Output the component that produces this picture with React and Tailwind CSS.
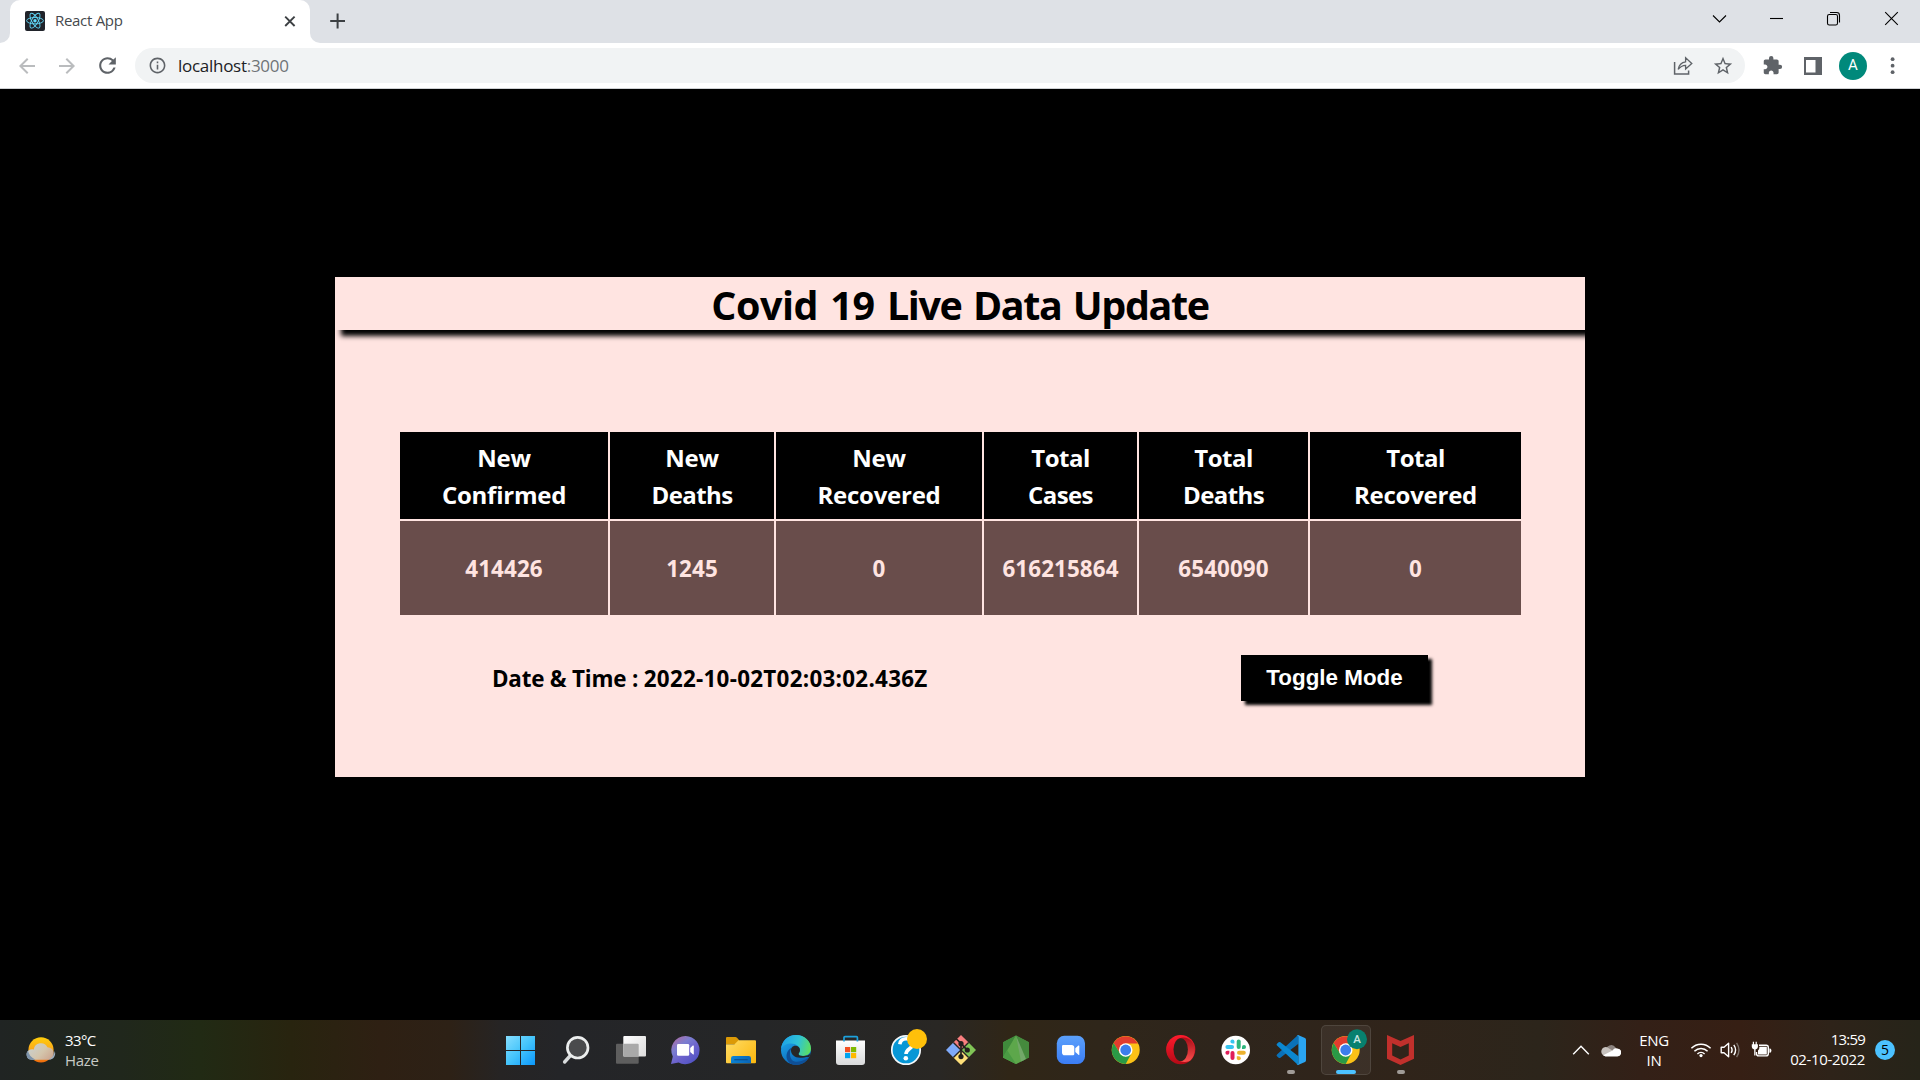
import React from "react";
import {
  MdArrowBack,
  MdArrowForward,
  MdRefresh,
  MdInfoOutline,
  MdStarBorder,
  MdExtension,
} from "react-icons/md";

/* ---------- Browser chrome ---------- */

function ReactFavicon() {
  return (
    <svg width="20" height="20" viewBox="0 0 20 20" fill="none">
      <rect width="20" height="20" rx="2" fill="#20232a" />
      <g stroke="#61dafb" strokeWidth="0.9">
        <ellipse cx="10" cy="9.7" rx="8.4" ry="3.2" />
        <ellipse cx="10" cy="9.7" rx="8.4" ry="3.2" transform="rotate(60 10 9.7)" />
        <ellipse cx="10" cy="9.7" rx="8.4" ry="3.2" transform="rotate(120 10 9.7)" />
      </g>
      <circle cx="10" cy="9.7" r="1.7" fill="#61dafb" />
    </svg>
  );
}

function WindowControl({ children }) {
  return (
    <div className="flex h-[37px] w-[57px] items-center justify-center">
      <svg width="15" height="15" viewBox="0 0 15 15" fill="none" stroke="#000" strokeWidth="1.1" className="overflow-visible">
        {children}
      </svg>
    </div>
  );
}

function TabStrip() {
  return (
    <div className="flex h-[43px] items-start bg-[#dee1e6]">
      <div className="flex h-[43px] w-[10px] flex-none bg-white">
        <div className="h-full w-full rounded-br-[10px] bg-[#dee1e6]" />
      </div>
      <div className="h-[43px] w-[300px] flex-none">
        <div className="flex h-[43px] items-start rounded-t-[10px] bg-white pl-[15px] pr-[12px] pt-[11px]">
          <ReactFavicon />
          <span className="ml-[10px] flex-1 text-[15px] leading-[19px] tracking-[-0.3px] text-[#45494d]">
            React App
          </span>
          <svg className="mt-[2px]" width="16" height="16" viewBox="0 0 16 16" stroke="#3c4043" strokeWidth="1.9">
            <path d="M3.2 3.6L12.6 13M12.6 3.6L3.2 13" />
          </svg>
        </div>
      </div>
      <div className="flex h-[43px] w-[10px] flex-none bg-white">
        <div className="h-full w-full rounded-bl-[10px] bg-[#dee1e6]" />
      </div>
      <svg className="ml-[10px] mt-[13px]" width="16" height="16" viewBox="0 0 16 16" stroke="#3c4043" strokeWidth="2">
        <path d="M7.6 0.6V15.4M0.2 8H15" />
      </svg>
      <div className="ml-auto flex pr-px">
        <WindowControl>
          <path d="M1 4.5L7.5 11L14 4.5" />
        </WindowControl>
        <WindowControl>
          <path d="M1 7.5H14" />
        </WindowControl>
        <WindowControl>
          <rect x="1.5" y="3.5" width="10" height="10.5" rx="1.8" />
          <path d="M4 1.5H10.6Q13.5 1.5 13.5 4.4V11.5" />
        </WindowControl>
        <WindowControl>
          <path d="M2.2 1.2L14.8 13.8M14.8 1.2L2.2 13.8" />
        </WindowControl>
      </div>
    </div>
  );
}

function ToolbarCell({ children }) {
  return <div className="flex h-[35px] w-[40px] flex-none items-center justify-center">{children}</div>;
}

function Toolbar() {
  return (
    <div className="flex h-[46px] items-center border-b border-[#cfd1d4] bg-white pl-[7px] pr-[7px] text-[#5f6368]">
      <ToolbarCell>
        <MdArrowBack size={24} color="#babcbe" />
      </ToolbarCell>
      <ToolbarCell>
        <MdArrowForward size={24} color="#babcbe" />
      </ToolbarCell>
      <ToolbarCell>
        <MdRefresh size={25} />
      </ToolbarCell>
      <div className="ml-[8px] flex h-[35px] w-[1610px] items-center rounded-full bg-[#f1f3f4] pl-[13px] pr-[2px]">
        <MdInfoOutline size={19} />
        <span className="ml-[11px] flex-1 text-[17px] leading-[35px] tracking-[-0.28px] text-[#202124]">
          localhost<span className="text-[#6f7377]">:3000</span>
        </span>
        <ToolbarCell>
          <svg width="20" height="20" viewBox="0 0 20 20" fill="none" stroke="#5f6368" strokeWidth="1.5">
            <path d="M1.6 6V18H15.6V14.5" />
            <path d="M5.2 13.4Q6.3 6.6 12.6 5.8V1.8L18.8 7.6L12.6 13V9.4Q8 9.6 5.2 13.4Z" strokeWidth="1.3" />
          </svg>
        </ToolbarCell>
        <ToolbarCell>
          <MdStarBorder size={22} />
        </ToolbarCell>
      </div>
      <div className="ml-[7px] flex items-center">
        <ToolbarCell>
          <MdExtension size={21} />
        </ToolbarCell>
        <div className="w-px" />
        <ToolbarCell>
          <svg width="18" height="18" viewBox="0 0 18 18">
            <path d="M0 0H18V18H0ZM2 3V15.5H11.5V3Z" fill="#5f6368" fillRule="evenodd" />
          </svg>
        </ToolbarCell>
        <ToolbarCell>
          <span className="flex h-[28px] w-[28px] items-center justify-center rounded-full bg-[#00897b] font-['Roboto'] text-[15px] leading-none text-white">
            A
          </span>
        </ToolbarCell>
        <ToolbarCell>
          <svg width="6" height="18" viewBox="0 0 6 18" fill="#5f6368">
            <circle cx="2.6" cy="2.2" r="1.9" />
            <circle cx="2.6" cy="8.7" r="1.9" />
            <circle cx="2.6" cy="15.2" r="1.9" />
          </svg>
        </ToolbarCell>
      </div>
    </div>
  );
}

/* ---------- Page content ---------- */

const COLUMNS = [
  { top: "New", bottom: "Confirmed", value: "414426" },
  { top: "New", bottom: "Deaths", value: "1245", tight: true },
  { top: "New", bottom: "Recovered", value: "0" },
  { top: "Total", bottom: "Cases", value: "616215864", tight: true },
  { top: "Total", bottom: "Deaths", value: "6540090", tight: true },
  { top: "Total", bottom: "Recovered", value: "0" },
];

function CovidCard() {
  return (
    <section className="h-[500px] w-[1250px] overflow-hidden bg-[#ffe4e1] text-black">
      <h1 className="h-[53px] pt-[3px] text-center text-[39.5px] font-bold leading-[50px] tracking-[-1.4px] shadow-[6px_6px_5px_#000] [word-spacing:2.6px]">
        <span className="tracking-[-0.5px]">Covid 19 </span>Live Data Update
      </h1>
      <div className="ml-[65px] mt-[102px] grid grid-cols-[208px_164px_206px_153px_169px_211px] grid-rows-[87px_94px] gap-[2px] text-center">
        {COLUMNS.map((c, i) => (
          <div
            key={`h${i}`}
            className="flex flex-col justify-center bg-black pt-px text-[24px] font-bold leading-[37px] tracking-[-0.25px] text-white"
          >
            <span className={c.top === "Total" ? "tracking-[-0.5px]" : ""}>{c.top}</span>
            <span className={c.tight ? "tracking-[-0.58px]" : ""}>{c.bottom}</span>
          </div>
        ))}
        {COLUMNS.map((c, i) => (
          <div
            key={`v${i}`}
            className="flex items-center justify-center bg-[#694d4b] pt-[2px] text-[22.4px] font-bold tracking-[0.1px] text-[#ffe4e1]"
          >
            {c.value}
          </div>
        ))}
      </div>
      <div className="mt-[40px] flex h-[46px] items-center justify-between pl-[157px] pr-[157px]">
        <p className="pt-[2px] text-[22.4px] font-bold tracking-[0.28px]">
          <span className="tracking-[-0.2px]">Date &amp; Time : </span>2022-10-02T02:03:02.436Z
        </p>
        <button className="h-[46px] w-[187px] bg-black pb-px font-['Liberation_Sans'] text-[22.4px] font-bold text-white shadow-[4px_4px_3px_#000]">
          Toggle Mode
        </button>
      </div>
    </section>
  );
}

/* ---------- Taskbar ---------- */

function Icon({ children }) {
  return (
    <svg width="40" height="40" viewBox="0 0 40 40" fill="none" className="overflow-visible">
      {children}
    </svg>
  );
}

function StartIcon() {
  return (
    <Icon>
      <defs>
        <linearGradient id="win" x1="6" y1="6" x2="35" y2="35" gradientUnits="userSpaceOnUse">
          <stop stopColor="#86deff" />
          <stop offset="0.5" stopColor="#44c4fb" />
          <stop offset="1" stopColor="#0b97fb" />
        </linearGradient>
      </defs>
      <path d="M6 6H20V20H6ZM21 6H35V20H21ZM6 21H20V35H6ZM21 21H35V35H21Z" fill="url(#win)" />
    </Icon>
  );
}

function SearchIcon() {
  return (
    <Icon>
      <path d="M15 26L9.6 32" stroke="#d9dcdd" strokeWidth="3.4" strokeLinecap="round" />
      <circle cx="22.7" cy="17.7" r="10.3" fill="#4a4b4d" stroke="#eceeee" strokeWidth="2.7" />
    </Icon>
  );
}

function TaskViewIcon() {
  return (
    <Icon>
      <defs>
        <linearGradient id="tv" x1="13" y1="6" x2="36" y2="26" gradientUnits="userSpaceOnUse">
          <stop stopColor="#fff" />
          <stop offset="1" stopColor="#dcdcdc" />
        </linearGradient>
      </defs>
      <rect x="6" y="13.7" width="22.7" height="20" rx="1" fill="#5e5e5e" />
      <rect x="13.3" y="6" width="22.7" height="20.4" rx="1" fill="url(#tv)" />
      <path d="M13.3 13.7H27.7Q28.7 13.7 28.7 14.7V26.4H13.3Z" fill="#a9a9a9" />
    </Icon>
  );
}

function ChatIcon() {
  return (
    <Icon>
      <defs>
        <linearGradient id="chat" x1="10" y1="8" x2="30" y2="33" gradientUnits="userSpaceOnUse">
          <stop stopColor="#a86ca8" />
          <stop offset="0.3" stopColor="#7b7ed0" />
          <stop offset="0.6" stopColor="#6c62cc" />
          <stop offset="1" stopColor="#4f52c4" />
        </linearGradient>
      </defs>
      <path d="M20.6 6A14.1 14.1 0 1 1 13.6 32.4L6 34L7.8 26.5A14.1 14.1 0 0 1 20.6 6Z" fill="url(#chat)" />
      <rect x="12" y="14" width="12.2" height="11.8" rx="1.3" fill="#fff" />
      <path d="M25.2 18L27.8 15.6Q28.8 15 28.8 16V24Q28.8 25 27.8 24.3L25.2 22Z" fill="#fff" />
    </Icon>
  );
}

function ExplorerIcon() {
  return (
    <Icon>
      <defs>
        <linearGradient id="fold" x1="8" y1="10" x2="34" y2="34" gradientUnits="userSpaceOnUse">
          <stop stopColor="#ffdb63" />
          <stop offset="1" stopColor="#fbb80f" />
        </linearGradient>
        <linearGradient id="foldb" x1="11" y1="26" x2="31" y2="34" gradientUnits="userSpaceOnUse">
          <stop stopColor="#0a86d8" />
          <stop offset="1" stopColor="#0a63b4" />
        </linearGradient>
      </defs>
      <path d="M6 8Q6 7 7 7H15.4Q16.3 7 17 7.8L19 10V14H6Z" fill="#dc9a07" />
      <path d="M6 14.2H14.5L18.5 10.3H35Q36 10.3 36 11.3V32.3Q36 33.3 35 33.3H7Q6 33.3 6 32.3Z" fill="url(#fold)" />
      <path d="M11 33.3V28.3Q11 26 13.3 26H28.7Q31 26 31 28.3V33.3Z" fill="url(#foldb)" />
      <path d="M14.3 29.7H27.7" stroke="#0b4f8f" strokeWidth="1.2" />
    </Icon>
  );
}

function EdgeIcon() {
  return (
    <Icon>
      <defs>
        <linearGradient id="edgeTop" x1="8" y1="12" x2="36" y2="20" gradientUnits="userSpaceOnUse">
          <stop stopColor="#1fa5e6" />
          <stop offset="0.5" stopColor="#2fc3d6" />
          <stop offset="1" stopColor="#5fe058" />
        </linearGradient>
        <linearGradient id="edgeLeft" x1="8" y1="14" x2="20" y2="35" gradientUnits="userSpaceOnUse">
          <stop stopColor="#1b9de2" />
          <stop offset="1" stopColor="#0a66b8" />
        </linearGradient>
      </defs>
      <circle cx="21" cy="20" r="15" fill="url(#edgeLeft)" />
      <path d="M15 24C15 32 22 35 33.5 27.6C31 32.4 26.5 35 21 35C14 35 10 29 12 23C13 20 15 18.5 17.2 17.5C15.8 19 15 21 15 24Z" fill="#0f4f96" />
      <path d="M6 19C7 10.5 13 5 21 5C29.5 5 36 11 36 18.4C36 23.4 32 26 28 26C25 26 23.6 25 23.6 24C23.6 23 25 22.4 25 20C25 16.4 21 13.4 16 13.4C11.5 13.4 7.6 15.4 6 19Z" fill="url(#edgeTop)" />
      <path d="M25 20C25 17.6 23 15.7 20.4 15.7C17.5 15.7 16 18 16 20.6C16 24.6 19.5 27.8 25 27.8C29 27.8 32 26.6 34 27.2L36 23C34 25.4 31 26 28 26C25 26 23.6 25 23.6 24C23.6 23 25 22.4 25 20Z" fill="#272727" />
    </Icon>
  );
}

function StoreIcon() {
  return (
    <Icon>
      <defs>
        <linearGradient id="store" x1="20" y1="10" x2="20" y2="35" gradientUnits="userSpaceOnUse">
          <stop stopColor="#fff" />
          <stop offset="1" stopColor="#d9dadb" />
        </linearGradient>
      </defs>
      <path d="M6 10.5H35V32Q35 35 32 35H9Q6 35 6 32Z" fill="url(#store)" />
      <path d="M14 11.5V7.6Q14 6.7 15 6.7H26.4Q27.4 6.7 27.4 7.6V11.5" stroke="#1da1dc" strokeWidth="1.7" />
      <rect x="15" y="17" width="5.2" height="5.2" fill="#f25022" />
      <rect x="21" y="17" width="5.2" height="5.2" fill="#7fba00" />
      <rect x="15" y="23" width="5.2" height="5.2" fill="#00a4ef" />
      <rect x="21" y="23" width="5.2" height="5.2" fill="#ffb900" />
    </Icon>
  );
}

function HelpIcon() {
  return (
    <Icon>
      <circle cx="21" cy="20" r="14.2" fill="#0797d6" stroke="#f4f8fa" strokeWidth="1.7" />
      <path d="M14.8 14.2C15.3 10.5 18 8.8 21.2 8.8C25 8.8 27.6 11 27.6 14.2C27.6 19 21 18.6 21 24" stroke="#fff" strokeWidth="3.6" />
      <circle cx="20.8" cy="28.2" r="2.3" fill="#fff" />
      <circle cx="32" cy="9" r="10" fill="#ffc00a" />
    </Icon>
  );
}

function GitIcon() {
  return (
    <Icon>
      <path d="M21 5L28.6 12.6L21 20.2L13.4 12.6Z" fill="#f97f7f" />
      <path d="M28.6 12.6L36 20L28.6 27.4L21 20Z" fill="#80c456" />
      <path d="M21 19.8L28.6 27.4L21 35L13.4 27.4Z" fill="#ffe07a" />
      <path d="M13.4 12.6L21 20L13.4 27.4L6 20Z" fill="#7faaf9" />
      <path d="M13.4 12.6L28.6 27.4M28.6 12.6L13.4 27.4" stroke="#2a2623" strokeWidth="1.4" />
      <path d="M16.4 9L21 13.4V26M21 13.6L27 19.8" stroke="#231f1e" strokeWidth="1.7" />
      <circle cx="21" cy="13.7" r="2.6" fill="#231f1e" />
      <circle cx="27.3" cy="20" r="2.6" fill="#231f1e" />
      <circle cx="21" cy="26.6" r="2.6" fill="#231f1e" />
    </Icon>
  );
}

function NodeIcon() {
  return (
    <Icon>
      <path d="M21 5.4L34 12.2V27.4L21 34L8 27.4V12.2Z" fill="#4b9440" />
      <path d="M21 5.4L8 12.2V27.4L21 5.4Z" fill="#3f8a3b" />
      <path d="M21 5.4L8 27.4L21 34L29 30Z" fill="#5da74b" />
      <path d="M21 5.4L34 12.2V27.4L28 30.4Z" fill="#458a3d" />
      <path d="M21 34L8 27.4L12 20Z" fill="#4a9a43" />
      <path d="M21 5.4L26 31.4L31 29Z" fill="#72a869" />
    </Icon>
  );
}

function ZoomIcon() {
  return (
    <Icon>
      <defs>
        <linearGradient id="zm" x1="21" y1="6" x2="21" y2="34" gradientUnits="userSpaceOnUse">
          <stop stopColor="#5ba0fb" />
          <stop offset="1" stopColor="#3b7df5" />
        </linearGradient>
      </defs>
      <rect x="6.8" y="5.8" width="28.2" height="28.2" rx="7.5" fill="url(#zm)" />
      <path d="M12 16.2Q12 15 13.2 15H21.5Q24.3 15 24.3 17.8V24Q24.3 25.2 23.1 25.2H14.8Q12 25.2 12 22.4Z" fill="#fff" />
      <path d="M25.3 18.2L28.4 15.6Q29.3 15 29.3 16V24.4Q29.3 25.4 28.4 24.7L25.3 22Z" fill="#fff" />
    </Icon>
  );
}

function ChromeDisc() {
  return (
    <g>
      <circle cx="20.7" cy="20" r="14" fill="#fbc116" />
      <path d="M20.7 13.4H32.9A14 14 0 0 0 8.6 13L15 23.3Z" fill="#e23c2e" />
      <path d="M8.6 13A14 14 0 0 0 20.7 34L26.5 23.3L20.7 26.6L15 23.3Z" fill="#2a9a46" />
      <circle cx="20.7" cy="20" r="6.8" fill="#fff" />
      <circle cx="20.7" cy="20" r="5.4" fill="#3b7ded" />
    </g>
  );
}

function OperaIcon() {
  return (
    <Icon>
      <defs>
        <linearGradient id="opl" x1="18" y1="5" x2="18" y2="34" gradientUnits="userSpaceOnUse">
          <stop stopColor="#ff1b2d" />
          <stop offset="1" stopColor="#b40a16" />
        </linearGradient>
        <linearGradient id="opr" x1="28" y1="6" x2="28" y2="34" gradientUnits="userSpaceOnUse">
          <stop stopColor="#a30a14" />
          <stop offset="1" stopColor="#ff5452" />
        </linearGradient>
      </defs>
      <circle cx="20.7" cy="19.6" r="14.6" fill="url(#opl)" />
      <path d="M16 11.2C18 8.6 20.6 7.4 23.4 7.4C26.6 7.4 29.6 9 31 10.5A14.6 14.6 0 0 1 30.6 30.2C27.5 32.6 20 33 16 27.8C18.3 29 24 29 26.2 19.5C24 10 18.3 10 16 11.2Z" fill="url(#opr)" />
      <ellipse cx="20.7" cy="19.6" rx="7.2" ry="11.4" fill="#2e241c" />
    </Icon>
  );
}

function SlackIcon() {
  return (
    <Icon>
      <circle cx="20.7" cy="20" r="14.3" fill="#fff" />
      <g strokeWidth="4" strokeLinecap="round">
        <path d="M12.4 17H17" stroke="#36c5f0" />
        <path d="M23.7 11.5V17" stroke="#2eb67d" />
        <path d="M24 22.8H28.8" stroke="#ecb22e" />
        <path d="M17.5 23V28" stroke="#e01e5a" />
      </g>
      <path d="M19.4 13.6H17.4A2 2 0 1 1 19.4 11.6Z" fill="#36c5f0" />
      <path d="M27 19V17A2 2 0 1 1 29 19Z" fill="#2eb67d" />
      <path d="M21.8 26.2H23.8A2 2 0 1 1 21.8 28.2Z" fill="#ecb22e" />
      <path d="M14.4 20.8V22.8A2 2 0 1 1 12.4 20.8Z" fill="#e01e5a" />
    </Icon>
  );
}

function VsCodeIcon() {
  return (
    <Icon>
      <path d="M28 5L7 24.4Q6 25.4 7 26.3L8.6 27.8Q9.5 28.4 10.4 27.8L28.4 13.8V5Z" fill="#0a71b8" />
      <path d="M28 35L7 15.6Q6 14.6 7 13.7L8.6 12.2Q9.5 11.6 10.4 12.2L28.4 26.2V35Z" fill="#0b87d0" />
      <path d="M28 5L35 8Q36 8.5 36 9.7V30.3Q36 31.5 35 32L28 35Q27.2 35 26.6 34.4Q28.4 35 28.4 33V7Q28.4 5 26.6 5.6Q27.2 5 28 5Z" fill="#2aa5f2" />
    </Icon>
  );
}

function ChromeProfileIcon() {
  return (
    <Icon>
      <ChromeDisc />
      <circle cx="32" cy="9.3" r="10" fill="#07806f" />
      <text x="32" y="13.3" textAnchor="middle" fontFamily="Roboto" fontSize="11.5" fontWeight="500" fill="#c9e6e1">
        A
      </text>
    </Icon>
  );
}

function McAfeeIcon() {
  return (
    <Icon>
      <path
        d="M7 5L20.5 11L34 5V28.8L20.5 35L7 28.8ZM12.2 13.2V25.4L20.5 29.4L28.8 25.4V13.2L20.5 17Z"
        fill="#c1302c"
        fillRule="evenodd"
      />
    </Icon>
  );
}

const APPS = [
  { icon: <StartIcon /> },
  { icon: <SearchIcon /> },
  { icon: <TaskViewIcon /> },
  { icon: <ChatIcon /> },
  { icon: <ExplorerIcon /> },
  { icon: <EdgeIcon /> },
  { icon: <StoreIcon /> },
  { icon: <HelpIcon /> },
  { icon: <GitIcon /> },
  { icon: <NodeIcon /> },
  { icon: <ZoomIcon /> },
  {
    icon: (
      <Icon>
        <ChromeDisc />
      </Icon>
    ),
  },
  { icon: <OperaIcon /> },
  { icon: <SlackIcon /> },
  { icon: <VsCodeIcon />, running: true },
  { icon: <ChromeProfileIcon />, active: true },
  { icon: <McAfeeIcon />, running: true },
];

function AppButton({ icon, running, active }) {
  return (
    <div className="relative flex h-[60px] w-[55px] items-center pl-[8px]">
      {active && (
        <div className="absolute left-[4px] top-[5px] h-[50px] w-[50px] rounded-[5px] border border-white/10 bg-white/[0.06]" />
      )}
      <div className="relative">{icon}</div>
      {running && <div className="absolute left-[25px] top-[50px] h-[4px] w-[8px] rounded-full bg-[#a09b97]" />}
      {active && <div className="absolute left-[19px] top-[50px] h-[4px] w-[20px] rounded-full bg-[#4cc2ff]" />}
    </div>
  );
}

function Weather() {
  return (
    <div className="flex h-full w-[492px] items-center">
      <svg className="ml-[25px]" width="32" height="30" viewBox="0 0 32 30">
        <defs>
          <linearGradient id="sun" x1="16" y1="2" x2="16" y2="28" gradientUnits="userSpaceOnUse">
            <stop stopColor="#ffcf0a" />
            <stop offset="0.5" stopColor="#fba81c" />
            <stop offset="1" stopColor="#ef6a0c" />
          </linearGradient>
          <linearGradient id="cloud" x1="5" y1="8" x2="26" y2="26" gradientUnits="userSpaceOnUse">
            <stop stopColor="#c6d3dc" />
            <stop offset="0.55" stopColor="#d2c8b4" />
            <stop offset="1" stopColor="#c9a594" />
          </linearGradient>
        </defs>
        <circle cx="16" cy="14.8" r="12.6" fill="url(#sun)" />
        <path
          d="M6.5 24.8A5.3 5.3 0 0 1 5.6 14.4A5 5 0 0 1 8.8 14.4A7.2 7.2 0 0 1 22.4 12.2A6.4 6.4 0 0 1 24 24.8Z"
          fill="url(#cloud)"
          fillOpacity="0.95"
        />
        <path d="M6.5 24.8A5.3 5.3 0 0 1 3 15.8Q3.6 21 10.5 24.8Z" fill="#7d93aa" />
        <path d="M24 24.8A6.4 6.4 0 0 0 29.7 16Q29.5 21 24 24.8Z" fill="#9fb0c2" />
      </svg>
      <div className="ml-[8px] pb-px text-[15px] leading-[20px]">
        <div className="tracking-[-0.63px] text-white">33°C</div>
        <div className="tracking-[-0.35px] text-[#c8cac6]">Haze</div>
      </div>
    </div>
  );
}

function Tray() {
  return (
    <div className="flex h-full items-center text-white">
      <svg width="18" height="12" viewBox="0 0 18 12" fill="none" stroke="#fff" strokeWidth="1.4">
        <path d="M1.2 10.2L9 2.2L16.8 10.2" />
      </svg>
      <svg className="ml-[11px]" width="20" height="14" viewBox="0 0 20 14">
        <path d="M5 8A5.2 5.2 0 0 1 14.6 4.6L17 8L10 11Z" fill="#8d8480" />
        <path d="M0.6 7A4.2 4.2 0 0 1 6 4.2L14 9L5 13.2A4.6 4.6 0 0 1 0.6 7Z" fill="#c7c2be" />
        <path d="M2.2 12.2L11.6 7.4A4 4 0 0 1 16.4 5.4A4 4 0 0 1 16 13.4H4.8A4.6 4.6 0 0 1 2.2 12.2Z" fill="#fff" />
      </svg>
      <div className="ml-[18px] w-[30px] pb-px text-center text-[15px] leading-[20px] tracking-[-0.3px]">
        <div>ENG</div>
        <div>IN</div>
      </div>
      <svg className="ml-[21px]" width="22" height="16" viewBox="0 0 22 16" fill="none" stroke="#fff" strokeWidth="1.5">
        <path d="M1.4 6.2A13.4 13.4 0 0 1 20.6 6.2" />
        <path d="M4.4 9.2A9.2 9.2 0 0 1 17.6 9.2" />
        <path d="M7.4 12A5.2 5.2 0 0 1 14.6 12" />
        <circle cx="11" cy="13.6" r="1.6" fill="#fff" stroke="none" />
      </svg>
      <svg className="ml-[8px]" width="22" height="18" viewBox="0 0 22 18" fill="none" stroke="#fff" strokeWidth="1.4">
        <path d="M1.2 6.2H4L8.6 2.2V15.8L4 11.8H1.2Z" strokeLinejoin="round" />
        <path d="M11.2 6Q13 9 11.2 12" />
        <path d="M13.8 3.8Q17.4 9 13.8 14.2" />
        <path d="M16.6 1.8Q21.4 9 16.6 16.2" stroke="#7a6f68" />
      </svg>
      <svg className="ml-[9px]" width="22" height="18" viewBox="0 0 22 18" fill="none">
        <path d="M8 4.3H15.2Q17.3 4.3 17.3 6.4V12.8Q17.3 14.9 15.2 14.9H7.6Q5.5 14.9 5.5 12.8V11" stroke="#fff" strokeWidth="1.4" />
        <path d="M8.4 5.8H15.8V13.4H7V9.4Q8.6 8.4 8.4 5.8Z" fill="#fff" />
        <path d="M18.4 7.4H19.2Q20.4 7.8 20.4 9.6Q20.4 11.4 19.2 11.8H18.4Z" fill="#fff" />
        <path d="M0.8 3.2H1.8V0.8H3V3.2H4.6V0.8H5.8V3.2H6.9V6Q6.9 8 4.5 8.4V14.6H3.2V8.4Q0.8 8 0.8 6Z" fill="#fff" />
      </svg>
      <div className="ml-[6px] w-[86px] pb-[3px] text-right text-[15px] leading-[20px] tracking-[-0.34px]">
        <div className="tracking-[-0.8px]">13:59</div>
        <div>02-10-2022</div>
      </div>
      <div className="ml-[10px] mr-[25px] flex h-[20px] w-[20px] items-center justify-center rounded-full bg-[#4cc2ff] text-[14px] leading-none text-black">
        5
      </div>
    </div>
  );
}

function Taskbar() {
  return (
    <footer className="flex h-[60px] justify-between bg-[linear-gradient(90deg,#202423_0px,#20271c_120px,#212a14_200px,#28240f_290px,#2e2013_380px,#2d2116_450px,#262424_500px,#242528_560px,#252627_760px,#292724_940px,#302617_1010px,#2f261a_1100px,#2e251c_1220px,#30241a_1400px,#2c251b_1540px,#332017_1640px,#361f14_1740px,#2e2319_1830px,#262419_1919px)]">
      <div className="flex">
        <Weather />
        <div className="flex">
          {APPS.map((a, i) => (
            <AppButton key={i} {...a} />
          ))}
        </div>
      </div>
      <Tray />
    </footer>
  );
}

export default function App() {
  return (
    <div className="flex h-[1080px] w-[1920px] flex-col overflow-hidden bg-black font-['Open_Sans','Noto_Sans',sans-serif]">
      <TabStrip />
      <Toolbar />
      <main className="flex flex-1 justify-center bg-black pt-[188px]">
        <CovidCard />
      </main>
      <Taskbar />
    </div>
  );
}
